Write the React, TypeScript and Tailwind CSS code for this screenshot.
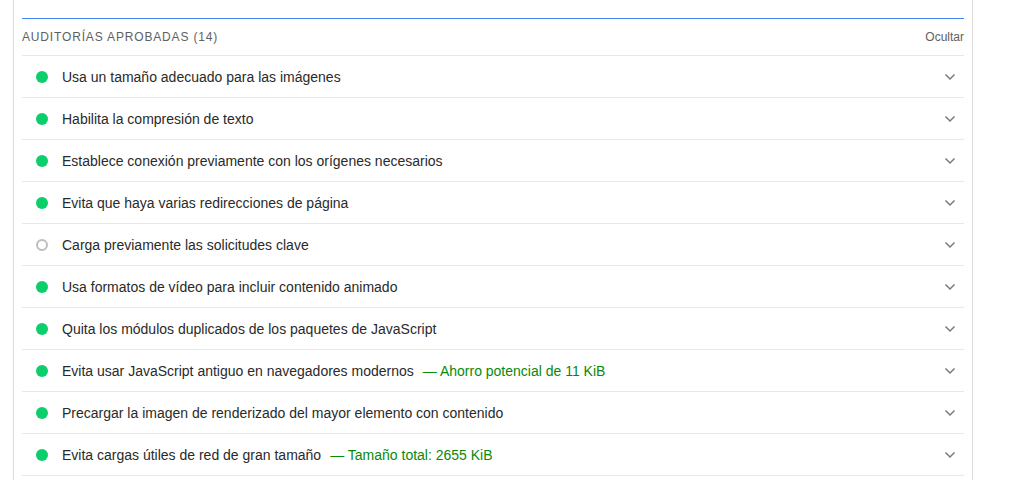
import React from "react";

interface Audit {
  title: string;
  display?: string;
  status: "pass" | "na";
}

const audits: Audit[] = [
  { title: "Usa un tamaño adecuado para las imágenes", status: "pass" },
  { title: "Habilita la compresión de texto", status: "pass" },
  { title: "Establece conexión previamente con los orígenes necesarios", status: "pass" },
  { title: "Evita que haya varias redirecciones de página", status: "pass" },
  { title: "Carga previamente las solicitudes clave", status: "na" },
  { title: "Usa formatos de vídeo para incluir contenido animado", status: "pass" },
  { title: "Quita los módulos duplicados de los paquetes de JavaScript", status: "pass" },
  {
    title: "Evita usar JavaScript antiguo en navegadores modernos",
    display: "Ahorro potencial de 11 KiB",
    status: "pass",
  },
  { title: "Precargar la imagen de renderizado del mayor elemento con contenido", status: "pass" },
  {
    title: "Evita cargas útiles de red de gran tamaño",
    display: "Tamaño total: 2655 KiB",
    status: "pass",
  },
];

function Chevron() {
  return (
    <svg width="12" height="8" viewBox="0 0 12 8" className="shrink-0">
      <path d="M1.5 1.5 L6 6 L10.5 1.5" fill="none" stroke="#7a7a7a" strokeWidth="1.5" />
    </svg>
  );
}

function AuditRow({ audit }: { audit: Audit }) {
  return (
    <div className="flex h-[42px] items-center border-b border-[#e8e8e8] pl-[14px] pr-[8px]">
      {audit.status === "pass" ? (
        <span className="h-[12px] w-[12px] shrink-0 rounded-full bg-[#0cce6b]" />
      ) : (
        <span className="h-[12px] w-[12px] shrink-0 rounded-full border-2 border-[#bdbdbd]" />
      )}
      <div className="ml-[14px] flex flex-1 items-center text-[14px] leading-5">
        <span className="text-[#2a2a2a]">{audit.title}</span>
        {audit.display && (
          <span className="ml-[9px] text-[#088a08]">— {audit.display}</span>
        )}
      </div>
      <Chevron />
    </div>
  );
}

export default function App() {
  return (
    <main className="min-h-screen bg-white font-['Liberation_Sans',Arial,sans-serif]">
      <div className="ml-[13px] w-[960px] border-x border-[#dcdcdc] px-[8px] pt-[18px] pb-[5px]">
        <div className="border-t border-[#4285f4]">
          <div className="flex h-[37px] items-center justify-between border-b border-[#e8e8e8] text-[12px] text-[#616161]">
            <span className="tracking-[0.07em]">AUDITORÍAS APROBADAS (14)</span>
            <span>Ocultar</span>
          </div>
          {audits.map((a) => (
            <AuditRow key={a.title} audit={a} />
          ))}
        </div>
      </div>
    </main>
  );
}
